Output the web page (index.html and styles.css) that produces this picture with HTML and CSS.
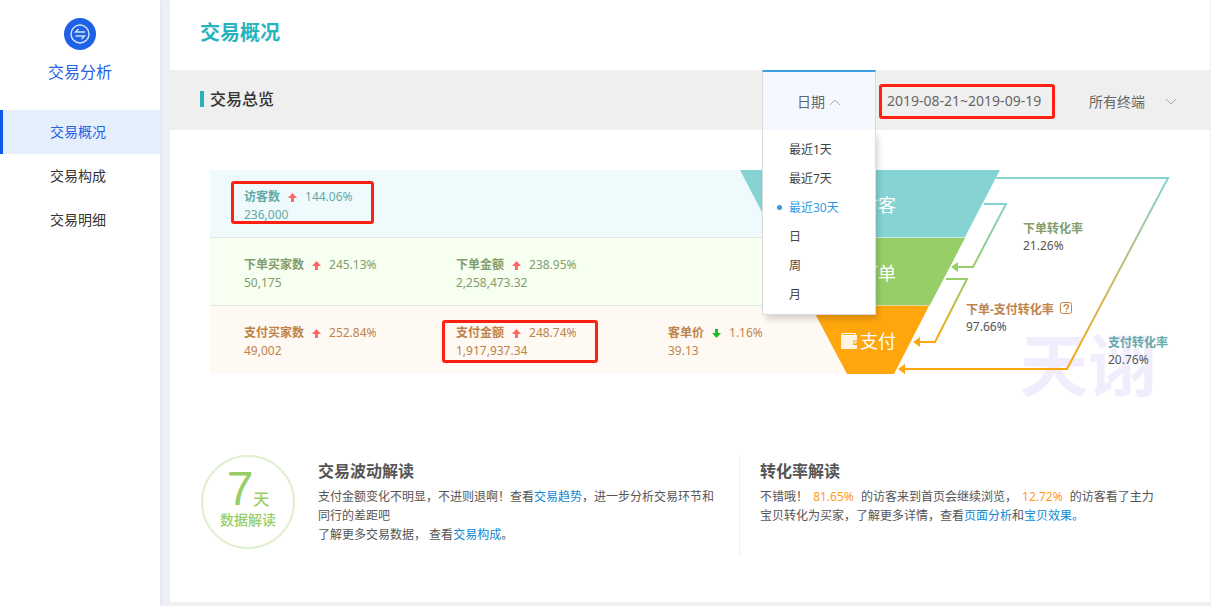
FILE: index.html
```html
<!DOCTYPE html>
<html lang="zh-CN">
<head>
<meta charset="utf-8">
<title>交易概况</title>
<link rel="stylesheet" href="styles.css">
</head>
<body>
<aside class="sidebar">
  <div class="brand">
    <svg class="brand-icon" viewBox="0 0 32 32" aria-hidden="true">
      <circle cx="16" cy="16" r="16" fill="#1f62e6"/>
      <g fill="none" stroke="#d5e2fb" stroke-width="1.4">
        <circle cx="16" cy="16" r="9"/>
        <path d="M21 14H11.5L14.5 11M11.500 18H20.500L17.500 21"/>
      </g>
    </svg>
    <span class="brand-name">交易分析</span>
  </div>
  <nav class="nav">
    <a class="nav-link active" href="#overview">交易概况</a>
    <a class="nav-link" href="#structure">交易构成</a>
    <a class="nav-link" href="#detail">交易明细</a>
  </nav>
</aside>
<main class="main">
  <h1 class="page-title">交易概况</h1>
  <div class="toolbar">
    <h2 class="section-title">交易总览</h2>
    <div class="picker">
      <button class="picker-button" type="button" aria-expanded="true">日期<svg class="chevron" viewBox="0 0 12 8" aria-hidden="true"><path d="M1 7L6 2L11 7"/></svg></button>
      <ul class="menu">
        <li><button class="option" type="button">最近1天</button></li>
        <li><button class="option" type="button">最近7天</button></li>
        <li><button class="option selected" type="button">最近30天</button></li>
        <li><button class="option" type="button">日</button></li>
        <li><button class="option" type="button">周</button></li>
        <li><button class="option" type="button">月</button></li>
      </ul>
    </div>
    <div class="range">2019-08-21~2019-09-19</div>
    <button class="terminal" type="button">所有终端<svg class="chevron" viewBox="0 0 12 8" aria-hidden="true"><path d="M1 1L6 6L11 1"/></svg></button>
  </div>

  <section class="chart">
    <div class="bands">
      <div class="band visitors">
        <div class="cell"><div class="metric marked"><b>访客数</b><svg class="arrow up" viewBox="0 0 9 9" aria-hidden="true"><path d="M4.500 0L9 5H6V9H3V5H0Z"/></svg><span>144.06%</span><p>236,000</p></div></div>
      </div>
      <div class="band orders">
        <div class="cell"><div class="metric"><b>下单买家数</b><svg class="arrow up" viewBox="0 0 9 9" aria-hidden="true"><path d="M4.500 0L9 5H6V9H3V5H0Z"/></svg><span>245.13%</span><p>50,175</p></div></div>
        <div class="cell"><div class="metric"><b>下单金额</b><svg class="arrow up" viewBox="0 0 9 9" aria-hidden="true"><path d="M4.500 0L9 5H6V9H3V5H0Z"/></svg><span>238.95%</span><p>2,258,473.32</p></div></div>
      </div>
      <div class="band payments">
        <div class="cell"><div class="metric"><b>支付买家数</b><svg class="arrow up" viewBox="0 0 9 9" aria-hidden="true"><path d="M4.500 0L9 5H6V9H3V5H0Z"/></svg><span>252.84%</span><p>49,002</p></div></div>
        <div class="cell"><div class="metric marked"><b>支付金额</b><svg class="arrow up" viewBox="0 0 9 9" aria-hidden="true"><path d="M4.500 0L9 5H6V9H3V5H0Z"/></svg><span>248.74%</span><p>1,917,937.34</p></div></div>
        <div class="cell"><div class="metric"><b>客单价</b><svg class="arrow down" viewBox="0 0 9 9" aria-hidden="true"><path d="M4.500 9L0 4H3V0H6V4H9Z"/></svg><span>1.16%</span><p>39.13</p></div></div>
      </div>
    </div>
    <svg class="funnel" viewBox="0 0 430 250" role="img" aria-label="转化漏斗">
      <defs>
        <linearGradient id="toOrder" gradientUnits="userSpaceOnUse" x1="0" y1="33" x2="0" y2="98"><stop offset="0" stop-color="#85d3d3"/><stop offset="1" stop-color="#97ce68"/></linearGradient>
        <linearGradient id="toPay" gradientUnits="userSpaceOnUse" x1="0" y1="109" x2="0" y2="173"><stop offset="0" stop-color="#97ce68"/><stop offset="1" stop-color="#ffa60d"/></linearGradient>
        <linearGradient id="total" gradientUnits="userSpaceOnUse" x1="0" y1="8" x2="0" y2="200"><stop offset="0" stop-color="#85d3d3"/><stop offset="1" stop-color="#ffa60d"/></linearGradient>
      </defs>
      <text class="watermark" x="280" y="221">天诩</text>
      <path fill="#85d3d3" d="M0 0H260L225 67H35Z"/>
      <path fill="#97ce68" d="M36 68H225L190 135H71Z"/>
      <path fill="#ffa60d" d="M71 136H189L154 204H107Z"/>
      <path fill="none" stroke="#c5eee0" d="M35 67.500H225"/>
      <path fill="none" stroke="#e0d79a" d="M71 135.500H190"/>
      <path fill="#67baba" d="M131 51H137L134 54Z"/>
      <path fill="#73ad48" d="M131 125H137L134 128Z"/>
      <g fill="none" stroke-width="2">
        <path stroke="url(#total)" d="M256 8H428L327 199H164"/>
        <path stroke="url(#toOrder)" d="M244 34H266L233 97H216"/>
        <path stroke="url(#toPay)" d="M206 109H227L195 172H178"/>
      </g>
      <path fill="#97ce68" d="M211 97L218 92V102Z"/>
      <path fill="#ffa60d" d="M173 172L180 167V177ZM158 199L165 194V204Z"/>
      <path fill="#fff3e2" d="M101 165H117V170H113V175H117V179H101Z"/>
      <path fill="none" stroke="#fff" d="M102 165.500H115.500V163.500H102Z"/>
      <circle cx="115" cy="172" r="2" fill="#ffd58a"/>
      <g class="stage"><text x="120" y="42">访客</text><text x="120" y="110">订单</text><text x="120" y="178">支付</text></g>
      <g class="rate">
        <text class="green" x="283" y="63">下单转化率</text><text x="283" y="80">21.26%</text>
        <text class="brown" x="226" y="144">下单-支付转化率</text><text x="226" y="161">97.66%</text>
        <text class="teal" x="368" y="177">支付转化率</text><text x="368" y="194">20.76%</text>
      </g>
      <rect x="320.500" y="132.500" width="11" height="11" rx="2" fill="none" stroke="#c08448"/>
      <path fill="none" stroke="#c08448" stroke-width="1.300" d="M324 137C324 134 328.500 134 328.500 136.500C328.500 138 326.300 138 326.300 140M326.300 141V142.300"/>
    </svg>
  </section>

  <section class="insights">
    <div class="badge"><span class="badge-days"><span class="badge-number">7</span>天</span><span class="badge-label">数据解读</span></div>
    <article class="insight">
      <h3>交易波动解读</h3>
      <p>支付金额变化不明显，不进则退啊！查看<a href="#trend">交易趋势</a>，进一步分析交易环节和同行的差距吧</p>
      <p>了解更多交易数据， 查看<a href="#structure">交易构成</a>。</p>
    </article>
    <article class="insight conversion">
      <h3>转化率解读</h3>
      <p>不错哦！ <em>81.65%</em> 的访客来到首页会继续浏览， <em>12.72%</em> 的访客看了主力宝贝转化为买家，了解更多详情，查看<a href="#pages">页面分析</a>和<a href="#items">宝贝效果。</a></p>
    </article>
  </section>
</main>
</body>
</html>
```

FILE: styles.css
```css
* { box-sizing: border-box; }
body {
  margin: 0;
  min-height: 100vh;
  display: flex;
  background: #edf1f7;
  color: #555;
  font: 12px/18px "Noto Sans", "Noto Sans CJK SC", sans-serif;
}
h1, h2, h3, p, ul { margin: 0; padding: 0; }
ul { list-style: none; }
a { color: #1187d2; text-decoration: none; }
button { border: 0; padding: 0; margin: 0; background: none; font: inherit; color: inherit; cursor: pointer; }

.sidebar { flex: 0 0 160px; background: #fff; box-shadow: 1px 0 3px #dfe4ec; }
.brand { display: flex; flex-direction: column; align-items: center; gap: 10px; padding: 18px 0 26px; color: #1f62e6; }
.brand-icon { width: 32px; height: 32px; }
.brand-name { font-size: 16px; line-height: 24px; }
.nav-link { display: block; padding-left: 50px; font-size: 14px; line-height: 44px; color: #333; }
.nav-link.active { padding-left: 47px; border-left: 3px solid #0b5be6; background: #e5effc; color: #1f62e6; }

.main { flex: 1; min-width: 0; margin: 0 1px 4px 10px; background: #fff; box-shadow: 0 4px #f0f0f0; }
.page-title { padding-left: 30px; font-size: 20px; line-height: 66px; height: 70px; color: #27b3bd; }
.toolbar { display: flex; height: 60px; background: #efefef; font-size: 14px; color: #666; }
.section-title { align-self: center; margin: 0 auto 2px 30px; padding-left: 6px; border-left: 4px solid #27b3bd; font-size: 16px; line-height: 16px; font-weight: 500; color: #333; }
.picker { position: relative; width: 114px; }
.picker-button { display: flex; align-items: center; justify-content: center; gap: 4px; width: 100%; height: 60px; padding-top: 2px; background: #f5f9ff; border: 1px solid #dcdcdc; border-top: 2px solid #3ba0e3; border-bottom: 0; }
.chevron { width: 12px; height: 8px; fill: none; stroke: #aaa; }
.menu { position: absolute; z-index: 3; top: 60px; left: 0; width: 100%; padding: 5px 0; background: #fff; border: 1px solid #dcdcdc; border-top: 0; box-shadow: 3px 5px 6px -1px rgba(0, 0, 0, .16); font-size: 12px; color: #444; }
.option { position: relative; width: 100%; padding-left: 26px; line-height: 29px; text-align: left; display: block; }
.option.selected { color: #3399e6; }
.option.selected::before { content: ""; position: absolute; left: 14px; top: 12px; width: 5px; height: 5px; border-radius: 50%; background: #3399e6; }
.range { align-self: center; margin: 2px 0 0 3px; width: 176px; padding: 0 5px 2px; border: 3px solid #ff2012; border-radius: 3px; line-height: 27px; white-space: nowrap; }
.terminal { display: flex; align-items: center; gap: 20px; margin: 0 33px 0 34px; padding-top: 3px; }

.chart { display: grid; grid-template-columns: minmax(0, 1fr); padding: 40px 40px 0; }
.bands { grid-area: 1 / 1; margin-right: 320px; }
.band { display: flex; height: 68px; padding: 18px 0 0 34px; border-bottom: 1px solid #dee6e2; }
.visitors { background: #eefafb; color: #64aaaa; }
.orders { background: #f6fff0; color: #839c6c; }
.payments { background: #fff9f3; color: #bd834b; border-bottom: 0; }
.cell { flex: 0 0 212px; }
.metric { position: relative; display: inline-block; white-space: nowrap; }
.metric.marked::after { content: ""; position: absolute; inset: -7px -21px 0 -13px; border: 3px solid #ff2012; border-radius: 3px; }
.payments .metric.marked::after { inset: -4px -21px -3px -14px; }
.arrow { width: 9px; height: 9px; margin: 0 8px; vertical-align: -1px; }
.up { fill: #ff6666; }
.down { fill: #22bb22; }
.funnel { grid-area: 1 / 1; justify-self: end; width: 430px; height: 250px; }
.stage { fill: #fff; font-size: 18px; }
.rate { fill: #555; }
.rate .green, .rate .brown, .rate .teal { font-weight: bold; }
.rate .green { fill: #839c6c; }
.rate .brown { fill: #bd834b; }
.rate .teal { fill: #64aaaa; }
.watermark { fill: #f1edfd; font-size: 68px; font-weight: 700; }

.insights { display: flex; padding: 34px 40px 44px 31px; }
.badge { flex: none; display: flex; flex-direction: column; align-items: center; width: 94px; height: 94px; margin: 1px 23px 0 0; padding-top: 14px; border: 2px solid #dff0d0; border-radius: 50%; color: #97ce68; font-weight: 500; }
.badge-days { display: flex; align-items: flex-end; height: 38px; font-size: 16px; line-height: 20px; }
.badge-number { font-family: "Liberation Sans", sans-serif; font-size: 48px; line-height: 40px; font-weight: 400; }
.badge-label { font-size: 14px; line-height: 22px; }
.insight { flex: 1 1 0; padding: 5px 20px 12px 0; line-height: 19px; }
.insight h3 { padding-bottom: 4px; font-size: 16px; line-height: 24px; }
.conversion { flex: 0 0 431px; padding: 5px 10px 12px 20px; border-left: 1px solid #f0f0f0; }
em { margin: 0 4px 0 2px; font-style: normal; color: #ff9a1f; }
```
